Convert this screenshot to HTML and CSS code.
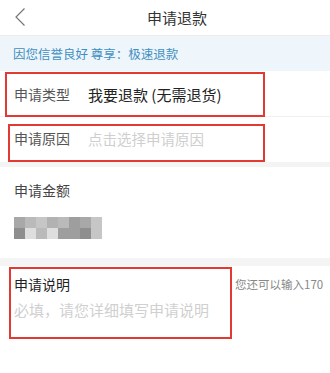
FILE: index.html
```html
<!DOCTYPE html>
<html lang="zh">
<head>
<meta charset="utf-8">
<link rel="stylesheet" href="styles.css">
</head>
<body>
<div class="page">
  <header class="topbar">
    <svg class="back" width="12" height="20" viewBox="0 0 12 20"><path d="M10.5 1.5 L2 10 L10.5 18.5" fill="none" stroke="#777" stroke-width="1.2"/></svg>
    <div class="title">申请退款</div>
  </header>
  <div class="banner">因您信誉良好 尊享：极速退款</div>
  <div class="row row-type">
    <span class="label">申请类型</span>
    <span class="value">我要退款 (无需退货)</span>
    <div class="mark mark-type"></div>
  </div>
  <div class="row row-reason">
    <span class="label">申请原因</span>
    <span class="value placeholder">点击选择申请原因</span>
    <div class="mark mark-reason"></div>
  </div>
  <div class="gap gap-small"></div>
  <section class="amount">
    <div class="label">申请金额</div>
    <div class="mosaic">
      <i class="g4"></i><i class="g6"></i><i class="g7"></i><i class="g5"></i><i class="g6"></i><i class="g3"></i><i class="g4"></i><i class="g7"></i>
      <i class="g2"></i><i class="g9"></i><i class="g6"></i><i class="g9"></i><i class="g3"></i><i class="g3"></i><i class="g2"></i><i class="g7"></i>
    </div>
  </section>
  <div class="gap gap-big"></div>
  <section class="desc">
    <div class="desc-head">
      <span class="desc-label">申请说明</span>
      <span class="counter">您还可以输入170</span>
    </div>
    <div class="placeholder desc-ph">必填，请您详细填写申请说明</div>
    <div class="mark mark-desc"></div>
  </section>
</div>
</body>
</html>
```

FILE: styles.css
```css
* { box-sizing: border-box; margin: 0; padding: 0; }
html, body { background: #fff; }
body {
  width: 330px;
  height: 373px;
  overflow: hidden;
  font-family: "Noto Sans CJK SC", "Noto Sans", sans-serif;
}
.page { width: 330px; }

.topbar {
  height: 36px;
  display: flex;
  align-items: center;
  border-bottom: 1px solid #ececec;
  background: #fff;
}
.back { margin-left: 14px; flex: none; margin-top: -2px; }
.title {
  margin-left: 121px;
  font-size: 15px;
  color: #333;
  line-height: 20px;
}

.banner {
  height: 35px;
  background: #eef6fb;
  color: #3f8fc2;
  font-size: 12.5px;
  line-height: 35px;
  padding-left: 13px;
}

.row {
  position: relative;
  height: 45px;
  display: flex;
  align-items: center;
  padding-left: 14px;
  background: #fff;
}
.row-type { border-bottom: 1px solid #f0f0f0; height: 46px; padding-top: 1px; }
.row-reason { height: 45px; padding-bottom: 3px; }
.label {
  font-size: 14px;
  color: #555;
  width: 74px;
  flex: none;
}
.value {
  font-size: 15px;
  color: #222;
  white-space: nowrap;
}
.placeholder { color: #cfcfcf; font-size: 15px; }
.row-reason .value { font-size: 14.5px; }

.mark {
  position: absolute;
  border: 2px solid #e23a32;
  pointer-events: none;
}
.mark-type { left: 5px; top: 1px; width: 260px; height: 45px; }
.mark-reason { left: 8px; top: 7px; width: 257px; height: 38px; }
.mark-desc { left: 9px; top: 1px; width: 223px; height: 72px; }

.gap { background: #f4f4f4; }
.gap-small { height: 5px; }
.gap-big { height: 8px; }

.amount {
  height: 91px;
  padding: 13px 0 0 14px;
}
.amount .label { line-height: 20px; color: #444; }
.mosaic {
  margin-top: 17px;
  display: grid;
  grid-template-columns: repeat(8, 11px);
  grid-auto-rows: 11px;
  width: 88px;
}
.mosaic i { display: block; }
.g2 { background: #8e8e8e; }
.g3 { background: #9e9e9e; }
.g4 { background: #a8a8a8; }
.g5 { background: #b2b2b2; }
.g6 { background: #bababa; }
.g7 { background: #c6c6c6; }
.g9 { background: #dedede; }

.desc {
  position: relative;
  height: 107px;
  padding: 8px 0 0 14px;
}
.desc-head {
  display: flex;
  align-items: center;
  height: 20px;
  white-space: nowrap;
}
.desc-label {
  font-size: 14px;
  color: #222;
  width: 221px;
  flex: none;
}
.counter {
  font-size: 11.5px;
  color: #888;
}
.desc-ph {
  margin-top: 6px;
  font-size: 15px;
  line-height: 20px;
  color: #d0d0d0;
}
```
